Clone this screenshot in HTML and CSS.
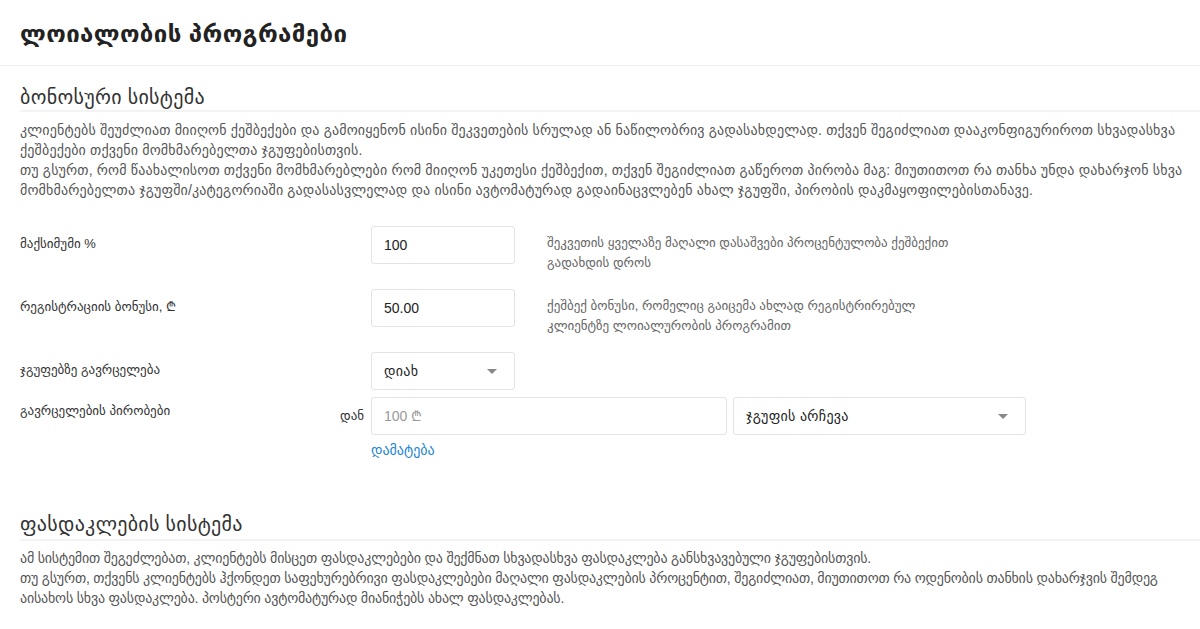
FILE: index.html
```html
<!DOCTYPE html>
<html lang="ka">

<head>
    <meta charset="UTF-8">
    <meta name="viewport" content="width=device-width, initial-scale=1.0">
    <title>ლოიალობის პროგრამები</title>
    <link rel="stylesheet" href="styles.css">
</head>

<body>
    <div class="page-head">
        <h1>ლოიალობის პროგრამები</h1>
    </div>

    <div class="section">
        <h2>ბონოსური სისტემა</h2>
        <p class="intro">
            კლიენტებს შეუძლიათ მიიღონ ქეშბექები და გამოიყენონ ისინი შეკვეთების სრულად ან ნაწილობრივ გადასახდელად. თქვენ შეგიძლიათ დააკონფიგურიროთ სხვადასხვა ქეშბექები თქვენი მომხმარებელთა ჯგუფებისთვის.<br>
            თუ გსურთ, რომ წაახალისოთ თქვენი მომხმარებლები რომ მიიღონ უკეთესი ქეშბექით, თქვენ შეგიძლიათ გაწეროთ პირობა მაგ: მიუთითოთ რა თანხა უნდა დახარჯონ სხვა მომხმარებელთა ჯგუფში/კატეგორიაში გადასასვლელად და ისინი ავტომატურად გადაინაცვლებენ ახალ ჯგუფში, პირობის დაკმაყოფილებისთანავე.
        </p>

        <div class="form">
            <div class="row">
                <div class="label">მაქსიმუმი %</div>
                <div class="field small"><input class="input" type="text" value="100"></div>
                <div class="help">შეკვეთის ყველაზე მაღალი დასაშვები პროცენტულობა ქეშბექით<br>გადახდის დროს</div>
            </div>
            <div class="row">
                <div class="label">რეგისტრაციის ბონუსი, ₾</div>
                <div class="field small"><input class="input" type="text" value="50.00"></div>
                <div class="help">ქეშბექ ბონუსი, რომელიც გაიცემა ახლად რეგისტრირებულ<br>კლიენტზე ლოიალურობის პროგრამით</div>
            </div>
            <div class="row close">
                <div class="label">ჯგუფებზე გავრცელება</div>
                <div class="field small">
                    <div class="select">დიახ<span class="caret"></span></div>
                </div>
            </div>
            <div class="row cond">
                <div class="label">გავრცელების პირობები</div>
                <div class="prefix">დან</div>
                <div class="field wide"><input class="input" type="text" placeholder="100 ₾"></div>
                <div class="field group">
                    <div class="select">ჯგუფის არჩევა<span class="caret"></span></div>
                </div>
            </div>
            <div class="add">
                <a class="link" href="#">დამატება</a>
            </div>
        </div>
    </div>

    <div class="section second">
        <h2>ფასდაკლების სისტემა</h2>
        <p class="intro">
            ამ სისტემით შეგეძლებათ, კლიენტებს მისცეთ ფასდაკლებები და შექმნათ სხვადასხვა ფასდაკლება განსხვავებული ჯგუფებისთვის.<br>
            თუ გსურთ, თქვენს კლიენტებს ჰქონდეთ საფეხურებრივი ფასდაკლებები მაღალი ფასდაკლების პროცენტით, შეგიძლიათ, მიუთითოთ რა ოდენობის თანხის დახარჯვის შემდეგ აისახოს სხვა ფასდაკლება. პოსტერი ავტომატურად მიანიჭებს ახალ ფასდაკლებას.
        </p>
    </div>
</body>

</html>
```

FILE: styles.css
```css
body {
    margin: 0;
    background: #fff;
    color: #333;
    font-family: "Liberation Sans", "DejaVu Sans", sans-serif;
    font-size: 13px;
}
h1, h2, p {
    margin: 0;
}
.page-head {
    height: 65px;
    padding: 0 20px;
    border-bottom: 1px solid #f0f0f0;
    display: flex;
    align-items: center;
}
.page-head h1 {
    font-size: 24px;
    letter-spacing: 0.4px;
    font-weight: bold;
    color: #222;
    margin-top: 2px;
}

.section {
    padding: 20px 10px 0 20px;
}
.section h2 {
    font-size: 20px;
    letter-spacing: 0.3px;
    font-weight: normal;
    color: #333;
    line-height: 22px;
    padding-bottom: 2px;
    margin-right: -10px;
    border-bottom: 2px solid #f3f3f3;
}
.intro {
    margin-top: 8px;
    line-height: 20px;
    color: #555;
    font-size: 14px;
    letter-spacing: 0.15px;
}

.form {
    margin-top: 26px;
}
.row {
    display: flex;
    align-items: flex-start;
    height: 38px;
    margin-bottom: 25px;
}
.row.close {
    margin-bottom: 7px;
}
.row.cond {
    margin-bottom: 5px;
}
.add {
    padding-left: 351px;
}
.label {
    width: 351px;
    flex-shrink: 0;
    padding-top: 9px;
    line-height: 18px;
}
.row.cond .label {
    width: 320px;
    padding-top: 5px;
}
.prefix {
    width: 26px;
    padding-top: 10px;
    margin-right: 5px;
    line-height: 18px;
}
.field.small {
    width: 144px;
}
.field.wide {
    width: 356px;
}
.field.group {
    width: 293px;
    margin-left: 6px;
}
.input, .select {
    box-sizing: border-box;
    width: 100%;
    height: 38px;
    border: 1px solid #e3e3e3;
    border-radius: 3px;
    padding: 0 12px;
    font-family: "Liberation Sans", "DejaVu Sans", sans-serif;
    font-size: 14px;
    color: #222;
    background: #fff;
    outline: none;
}
.input::placeholder {
    color: #9a9a9a;
}
.select {
    display: flex;
    align-items: center;
    justify-content: space-between;
    font-size: 14px;
    letter-spacing: 0.3px;
}
.caret {
    width: 0;
    height: 0;
    border-left: 5px solid transparent;
    border-right: 5px solid transparent;
    border-top: 5px solid #888;
    margin-right: 5px;
}
.help {
    margin-left: 32px;
    padding-top: 7px;
    line-height: 20px;
    color: #666;
}
.link {
    display: inline-block;
    color: #1a85d0;
    text-decoration: none;
    line-height: 20px;
    font-size: 14px;
}

.section.second {
    padding-top: 53px;
    padding-right: 4px;
}
.section.second h2 {
    padding-bottom: 4px;
    margin-right: -4px;
}
.section.second .intro {
    margin-top: 7px;
    letter-spacing: -0.2px;
}
```
